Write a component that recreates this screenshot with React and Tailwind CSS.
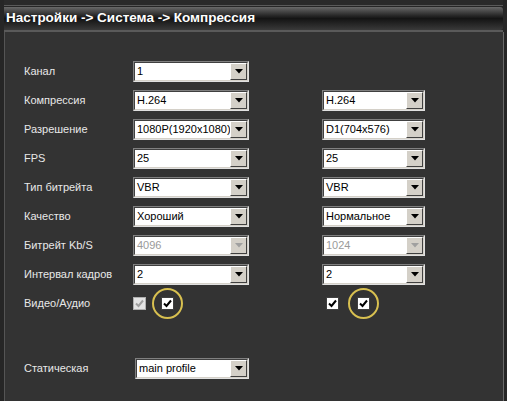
import React from "react";

const font = { fontFamily: '"Liberation Sans", Arial, sans-serif' };

function Arrow({ disabled }) {
  return (
    <div className="w-[17px] h-full bg-[#d4d0c8] border border-t-white border-l-white border-b-[#404040] border-r-[#404040] flex items-center justify-center">
      <svg width="8" height="5" viewBox="0 0 8 5">
        <polygon points="0,0 8,0 4,4.5" fill={disabled ? "#a0a0a0" : "#000"} />
      </svg>
    </div>
  );
}

function Select({ value, w = "w-[116px]", disabled }) {
  return (
    <div className={`${w} h-[21px] bg-white border border-t-[#808080] border-l-[#808080] border-b-[#e0e0e0] border-r-[#e0e0e0] flex`}>
      <div className="flex-1 flex items-stretch border border-t-[#404040] border-l-[#404040] border-b-[#d4d0c8] border-r-[#d4d0c8] min-w-0">
        <div className={`flex-1 pl-[2px] text-[11px] leading-[17px] whitespace-nowrap overflow-hidden ${disabled ? "text-[#9a9a9a]" : "text-black"}`}>
          {value}
        </div>
        <Arrow disabled={disabled} />
      </div>
    </div>
  );
}

function Check({ disabled, circled }) {
  const box = (
    <div className={`w-[13px] h-[13px] border flex items-center justify-center ${disabled ? "bg-[#e4e4e4] border-[#b0b0b0]" : "bg-white border-[#404040]"}`}>
      <svg width="9" height="9" viewBox="0 0 9 9">
        <path d="M1 4.5 L3.5 7 L8 1.5" stroke={disabled ? "#a0a0a0" : "#000"} strokeWidth="2" fill="none" />
      </svg>
    </div>
  );
  if (!circled) return box;
  return (
    <div className="relative w-[13px] h-[13px]">
      {box}
      <div className="absolute left-[-9px] top-[-9px] w-[31px] h-[31px] rounded-full border-2 border-[#d8c050]" />
    </div>
  );
}

const rows = [
  { label: "Канал", left: "1" },
  { label: "Компрессия", left: "H.264", right: "H.264" },
  { label: "Разрешение", left: "1080P(1920x1080)", right: "D1(704x576)" },
  { label: "FPS", left: "25", right: "25" },
  { label: "Тип битрейта", left: "VBR", right: "VBR" },
  { label: "Качество", left: "Хороший", right: "Нормальное" },
  { label: "Битрейт Kb/S", left: "4096", right: "1024", disabled: true },
  { label: "Интервал кадров", left: "2", right: "2" },
];

export default function App() {
  return (
    <div className="w-[507px] h-[401px] bg-[#262626] flex flex-col overflow-hidden" style={font}>
      <div className="h-[6px] bg-[#2a2a2a] border-b border-[#5a5a5a] mx-[4px]" />
      <div className="h-[23px] mx-[4px] mt-[1px] rounded-r-[3px] bg-gradient-to-b from-[#6a6a6a] via-[#141414] to-[#3a3a3a] flex items-center pl-[2px]">
        <span className="text-white font-bold text-[13.5px]">Настройки -&gt; Система -&gt; Компрессия</span>
      </div>
      <div className="h-[2px] mx-[4px] bg-[#5a5a5a]" />
      <div className="flex-1 bg-[#333333] ml-[4px] mr-[3px] border-l border-[#555555] border-r border-r-[#6a6a6a] pt-[25px] pl-[19px]">
        {rows.map((r) => (
          <div key={r.label} className="h-[29px] flex items-center">
            <div className="w-[109px] text-[11px] text-[#e8e8e8]">{r.label}</div>
            <Select value={r.left} disabled={r.disabled} />
            {r.right && (
              <div className="ml-[73px]">
                <Select value={r.right} w="w-[103px]" disabled={r.disabled} />
              </div>
            )}
          </div>
        ))}
        <div className="h-[29px] flex items-center">
          <div className="w-[109px] text-[11px] text-[#e8e8e8]">Видео/Аудио</div>
          <Check disabled />
          <div className="ml-[15px]"><Check circled /></div>
          <div className="ml-[152px]"><Check /></div>
          <div className="ml-[18px]"><Check circled /></div>
        </div>
        <div className="h-[36px]" />
        <div className="h-[29px] flex items-center">
          <div className="w-[111px] text-[11px] text-[#e8e8e8]">Статическая</div>
          <Select value="main profile" w="w-[114px]" />
        </div>
      </div>
    </div>
  );
}
